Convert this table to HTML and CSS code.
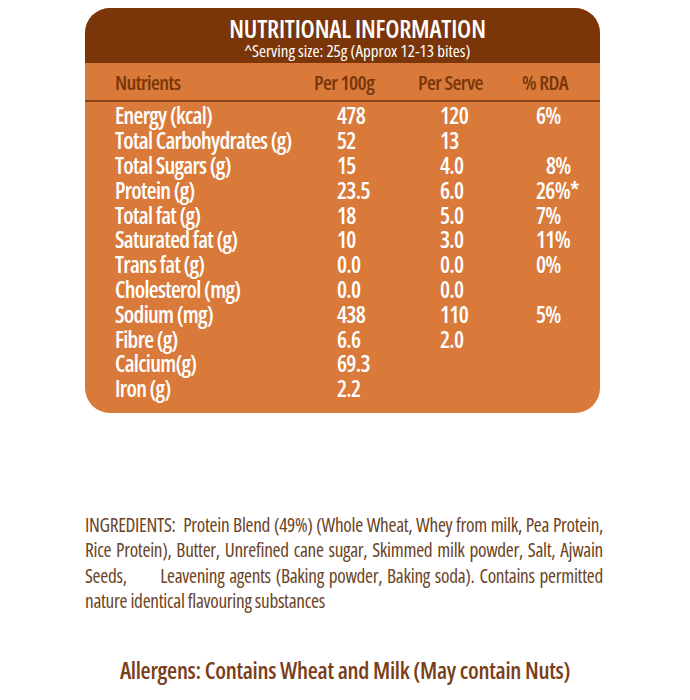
FILE: index.html
```html
<!DOCTYPE html>
<html lang="en">
<head>
<meta charset="utf-8">
<title>Nutritional Information</title>
<link rel="stylesheet" href="styles.css">
</head>
<body>
<main class="page">
  <section class="card">
    <header class="card-head">
      <h1 class="title">NUTRITIONAL INFORMATION</h1>
      <p class="subtitle">^Serving size: 25g (Approx 12-13 bites)</p>
    </header>
    <div class="col-head">
      <span>Nutrients</span>
      <span>Per 100g</span>
      <span>Per Serve</span>
      <span>% RDA</span>
    </div>
    <div class="rows">
      <div class="row"><span>Energy (kcal)</span><span>478</span><span>120</span><span>6%</span></div>
      <div class="row"><span>Total Carbohydrates (g)</span><span>52</span><span>13</span><span></span></div>
      <div class="row"><span>Total Sugars (g)</span><span>15</span><span>4.0</span><span class="shift">8%</span></div>
      <div class="row"><span>Protein (g)</span><span>23.5</span><span>6.0</span><span>26%*</span></div>
      <div class="row"><span>Total fat (g)</span><span>18</span><span>5.0</span><span>7%</span></div>
      <div class="row"><span>Saturated fat (g)</span><span>10</span><span>3.0</span><span>11%</span></div>
      <div class="row"><span>Trans fat (g)</span><span>0.0</span><span>0.0</span><span>0%</span></div>
      <div class="row"><span>Cholesterol (mg)</span><span>0.0</span><span>0.0</span><span></span></div>
      <div class="row"><span>Sodium (mg)</span><span>438</span><span>110</span><span>5%</span></div>
      <div class="row"><span>Fibre (g)</span><span>6.6</span><span>2.0</span><span></span></div>
      <div class="row"><span>Calcium(g)</span><span>69.3</span><span></span><span></span></div>
      <div class="row"><span>Iron (g)</span><span>2.2</span><span></span><span></span></div>
    </div>
  </section>

  <p class="ingredients">
    <span class="line just">INGREDIENTS:&nbsp; Protein Blend (49%) (Whole Wheat, Whey from milk, Pea Protein,</span>
    <span class="line just">Rice Protein), Butter, Unrefined cane sugar, Skimmed milk powder, Salt, Ajwain</span>
    <span class="line split"><span>Seeds,</span><span class="wide">Leavening agents (Baking powder, Baking soda). Contains permitted</span></span>
    <span class="line">nature identical flavouring substances</span>
  </p>

  <p class="allergens">Allergens: Contains Wheat and Milk (May contain Nuts)</p>
</main>
</body>
</html>
```
FILE: styles.css
```css
html, body {
  margin: 0;
  padding: 0;
  background: #ffffff;
}

body {
  font-family: "Open Sans", "Roboto", sans-serif;
  font-stretch: 75%;
}

.page {
  width: 690px;
  padding-top: 8px;
}

.card {
  margin-left: 85px;
  width: 515px;
  border-radius: 25px;
  overflow: hidden;
  background: #d97a3b;
}

.card-head {
  background: #7a3609;
  height: 55px;
  padding-left: 30px;
  display: flex;
  flex-direction: column;
  align-items: center;
  box-sizing: border-box;
  padding-top: 6px;
}

.title {
  margin: 0;
  font-size: 25px;
  line-height: 28px;
  font-weight: 600;
  color: #ffffff;
  letter-spacing: -0.2px;
}

.subtitle {
  margin: 0;
  font-size: 17px;
  line-height: 18px;
  font-weight: 500;
  color: #ffffff;
}

.col-head {
  display: grid;
  grid-template-columns: 199px 104px 104px 1fr;
  padding-left: 30px;
  height: 37px;
  align-items: center;
  border-bottom: 2px solid #8a4418;
  font-size: 20.5px;
  font-weight: 600;
  color: #7a3609;
  letter-spacing: -0.6px;
}

.rows {
  padding: 2px 0 11px 30px;
}

.row {
  display: grid;
  grid-template-columns: 222px 103px 96px 1fr;
  height: 24.8px;
  align-items: center;
  font-size: 22.5px;
  font-weight: 600;
  line-height: 24px;
  color: #ffffff;
  letter-spacing: -0.7px;
  white-space: nowrap;
}

.shift {
  padding-left: 10px;
}

.ingredients {
  margin: 99px 0 0 85px;
  width: 518px;
  font-size: 19.3px;
  line-height: 25.5px;
  color: #6b4426;
  letter-spacing: -0.3px;
}

.line {
  display: block;
  white-space: nowrap;
}

.just {
  text-align: justify;
  text-align-last: justify;
}

.split {
  display: flex;
  justify-content: space-between;
}

.wide {
  word-spacing: 1.6px;
}

.allergens {
  margin: 41px 0 0 0;
  text-align: center;
  font-size: 23.2px;
  line-height: 30px;
  font-weight: 600;
  color: #7a3f1a;
  letter-spacing: -0.3px;
}
```
